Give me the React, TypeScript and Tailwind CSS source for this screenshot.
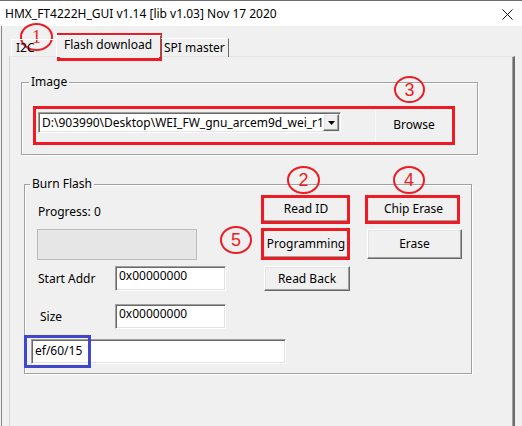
import React from "react";

const sunken =
  "border border-t-[#a0a0a0] border-l-[#a0a0a0] border-b-white border-r-white shadow-[inset_1px_1px_0_#696969,inset_-1px_-1px_0_#e3e3e3] bg-white";
const raised =
  "border border-t-white border-l-white border-b-[#696969] border-r-[#696969] shadow-[inset_-1px_-1px_0_#a0a0a0,inset_1px_1px_0_#e3e3e3] bg-[#f0f0f0] flex items-center justify-center leading-[16px]";
const groupBox =
  "border border-[#a0a0a0] shadow-[inset_1px_1px_0_#fff,1px_1px_0_#fff]";

function Legend({ text, ml }: { text: string; ml: string }) {
  return (
    <span className={`-mt-[9px] ${ml} block w-fit bg-[#f0f0f0] px-[2px] leading-[16px]`}>
      {text}
    </span>
  );
}

function Mark({ n, className, serif }: { n: string; className: string; serif?: boolean }) {
  return (
    <div
      className={`absolute flex items-center justify-center rounded-[50%] border-[2.5px] border-[#ed1c24] text-[18px] leading-none text-[#ed1c24] ${
        serif ? "font-['Liberation_Serif',serif]" : "font-['Liberation_Sans',sans-serif]"
      } ${className}`}
    >
      {n}
    </div>
  );
}

export default function App() {
  return (
    <div className="relative flex h-[426px] w-[522px] flex-col overflow-hidden border-t border-[#6d6d6d] bg-[#f0f0f0] font-['Noto_Sans',sans-serif] text-[12px] text-black">
      {/* title bar */}
      <div className="flex h-[25px] shrink-0 items-center justify-between bg-white pl-[5px] pr-[9px]">
        <span className="leading-[16px]">HMX_FT4222H_GUI v1.14 [lib v1.03] Nov 17 2020</span>
        <svg width="11" height="11" viewBox="0 0 11 11" className="mt-[1px]">
          <path d="M0.5 0.5 L10.5 10.5 M10.5 0.5 L0.5 10.5" stroke="#111" strokeWidth="1" />
        </svg>
      </div>

      {/* body */}
      <div className="ml-[1px] flex-1 border-l border-[#888] pl-[7px] pt-[9px]">
        {/* tabs */}
        <div className="relative z-10 ml-[2px] flex h-[22px] items-end">
          <div className="flex h-[18px] w-[45px] items-start border-l border-t border-[#fff] pl-[4px] pt-[0px] leading-[16px]">
            I2C
          </div>
          <div className="flex h-[22px] w-[105px] items-start border-l border-r border-t border-l-white border-t-white border-r-[#696969] bg-[#f0f0f0] pl-[7px] pt-[1px] leading-[16px]">
            Flash download
          </div>
          <div className="flex h-[19px] w-[68px] items-start border-r border-t border-t-white border-r-[#696969] pl-[3px] pt-[1px] leading-[16px]">
            SPI master
          </div>
        </div>

        {/* tab page */}
        <div className="-mt-[1px] h-[380px] w-[506px] border-l border-t border-r-2 border-l-[#d4d4d4] border-t-[#e3e3e3] border-r-[#6d6d6d] shadow-[inset_-1px_0_0_#a0a0a0]">
          {/* Image group */}
          <div className={`ml-[11px] mt-[25px] flex h-[73px] w-[457px] flex-col ${groupBox}`}>
            <Legend text="Image" ml="ml-[7px]" />
            <div className="ml-[16px] mt-[17px] flex items-start">
              <div className={`mt-[5px] flex h-[21px] w-[303px] items-center ${sunken}`}>
                <span className="flex-1 overflow-hidden whitespace-nowrap pl-[3px] leading-[16px]">
                  D:\903990\Desktop\WEI_FW_gnu_arcem9d_wei_r1
                </span>
                <div className={`mr-[1px] h-[17px] w-[16px] ${raised}`}>
                  <svg width="7" height="4" viewBox="0 0 7 4">
                    <path d="M0 0 H7 L3.5 4 Z" fill="#000" />
                  </svg>
                </div>
              </div>
              <div className="ml-[34px] flex h-[35px] w-[77px] items-center justify-center border-l border-l-[#fafafa] leading-[16px]">
                Browse
              </div>
            </div>
          </div>

          {/* Burn Flash group */}
          <div className={`ml-[14px] mt-[29px] flex h-[190px] w-[448px] flex-col ${groupBox}`}>
            <Legend text="Burn Flash" ml="ml-[5px]" />
            <div className="flex items-start">
              <div className="ml-[12px] flex w-[189px] flex-col">
                <span className="mt-[12px] pl-[1px] leading-[16px]">Progress: 0</span>
                <div className="mt-[9px] h-[31px] w-[160px] border border-[#bcbcbc] bg-[#e6e6e6]" />
                <div className="mt-[6px] flex items-center">
                  <span className="w-[78px] pl-[1px] leading-[16px]">Start Addr</span>
                  <div className={`h-[25px] w-[111px] pl-[3px] pt-[1px] leading-[16px] ${sunken}`}>0x00000000</div>
                </div>
                <div className="mt-[13px] flex items-center">
                  <span className="w-[78px] pl-[3px] leading-[16px]">Size</span>
                  <div className={`h-[25px] w-[111px] pl-[3px] pt-[1px] leading-[16px] ${sunken}`}>0x00000000</div>
                </div>
              </div>
              <div className="ml-[37px] mt-[4px] flex flex-col">
                <div className="flex items-start gap-[18px]">
                  <button className={`h-[26px] w-[86px] ${raised}`}>Read ID</button>
                  <button className={`h-[26px] w-[93px] ${raised}`}>Chip Erase</button>
                </div>
                <div className="mt-[7px] flex items-start gap-[18px]">
                  <button className={`h-[29px] w-[86px] ${raised}`}>Programming</button>
                  <button className={`h-[30px] w-[95px] ${raised}`}>Erase</button>
                </div>
                <div className="mt-[7px] flex">
                  <button className={`ml-[1px] h-[25px] w-[86px] ${raised}`}>Read Back</button>
                </div>
              </div>
            </div>
            <div className={`ml-[6px] mt-[10px] h-[25px] w-[255px] pl-[3px] pt-[3px] leading-[16px] ${sunken}`}>
              ef/60/15
            </div>
          </div>
        </div>
      </div>

      {/* annotations */}
      <div className="absolute left-[57px] top-[32px] h-[28px] w-[105px] border-[3px] border-[#ed1c24]" />
      <div className="absolute left-[33px] top-[105px] h-[39px] w-[422px] border-[3px] border-[#ed1c24]" />
      <div className="absolute left-[261px] top-[194px] h-[29px] w-[89px] border-[3px] border-[#ed1c24]" />
      <div className="absolute left-[365px] top-[194px] h-[29px] w-[95px] border-[3px] border-[#ed1c24]" />
      <div className="absolute left-[261px] top-[227px] h-[32px] w-[89px] border-[3px] border-[#ed1c24]" />
      <div className="absolute left-[24px] top-[334px] h-[33px] w-[67px] border-[3px] border-[#3f48cc]" />

      <Mark n="1" serif className="left-[20px] top-[22px] h-[28px] w-[33px]" />
      <Mark n="3" className="left-[394px] top-[75px] h-[27px] w-[31px]" />
      <Mark n="2" className="left-[287px] top-[165px] h-[28px] w-[33px]" />
      <Mark n="4" className="left-[393px] top-[165px] h-[28px] w-[32px]" />
      <Mark n="5" className="left-[220px] top-[225px] h-[28px] w-[32px]" />
    </div>
  );
}
